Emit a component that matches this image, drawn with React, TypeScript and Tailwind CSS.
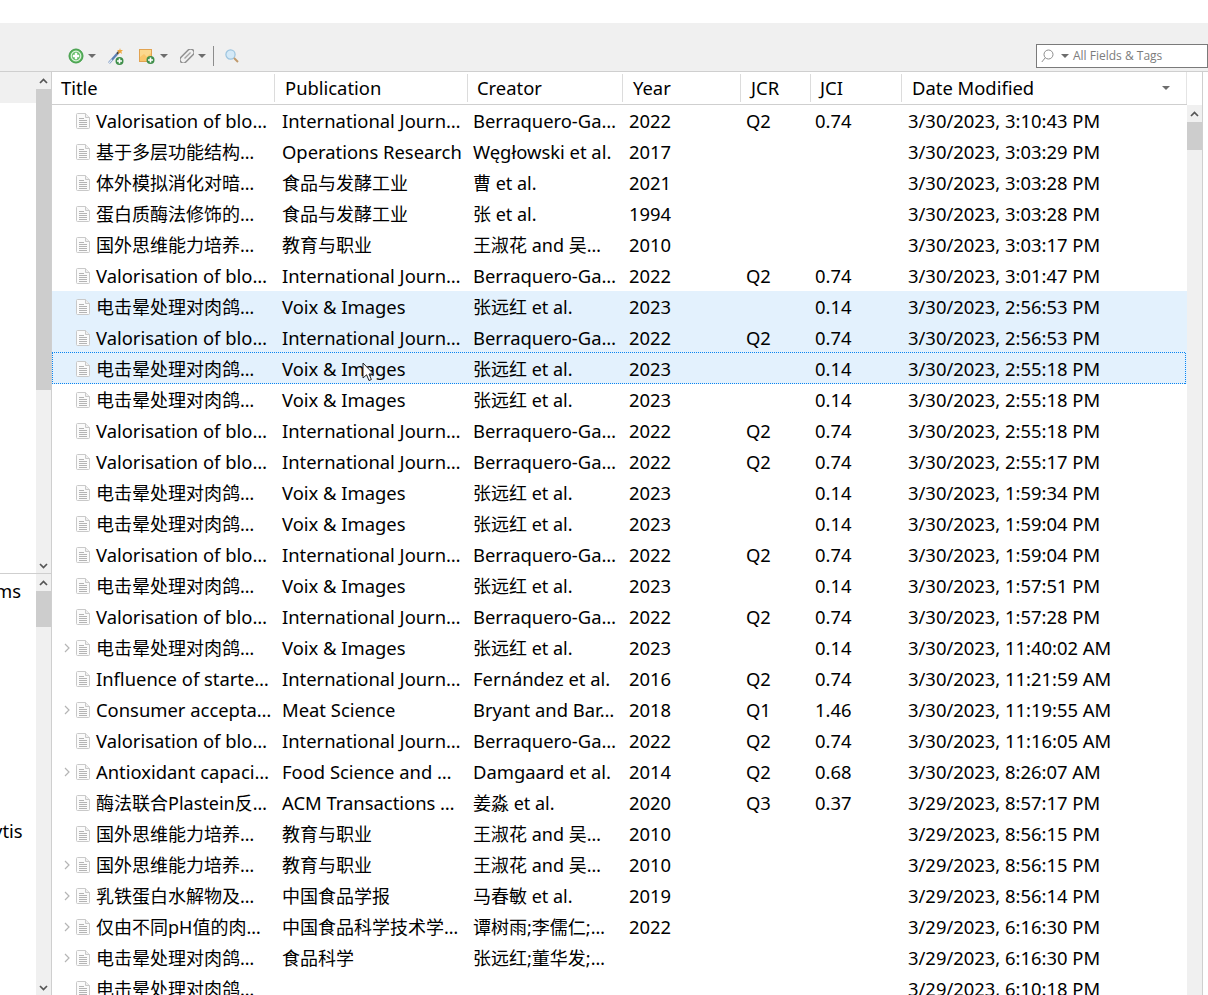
const rowCols = "grid grid-cols-[226px_191px_156px_117px_69px_93px_1fr]";
const headCols = "grid grid-cols-[223px_193px_155px_118px_70px_91px_1fr]";

const VAL = ["Valorisation of blo…", "International Journ…", "Berraquero-Ga…", "2022", "Q2", "0.74"];
const VOIX = ["电击晕处理对肉鸽…", "Voix & Images", "张远红 et al.", "2023", "", "0.14"];
const GW = ["国外思维能力培养…", "教育与职业", "王淑花 and 吴…", "2010", "", ""];

const rows: { c: string[]; d: string; exp?: boolean; sel?: boolean; focus?: boolean }[] = [
  { c: VAL, d: "3/30/2023, 3:10:43 PM" },
  { c: ["基于多层功能结构…", "Operations Research", "Węgłowski et al.", "2017", "", ""], d: "3/30/2023, 3:03:29 PM" },
  { c: ["体外模拟消化对暗…", "食品与发酵工业", "曹 et al.", "2021", "", ""], d: "3/30/2023, 3:03:28 PM" },
  { c: ["蛋白质酶法修饰的…", "食品与发酵工业", "张 et al.", "1994", "", ""], d: "3/30/2023, 3:03:28 PM" },
  { c: GW, d: "3/30/2023, 3:03:17 PM" },
  { c: VAL, d: "3/30/2023, 3:01:47 PM" },
  { c: VOIX, d: "3/30/2023, 2:56:53 PM", sel: true },
  { c: VAL, d: "3/30/2023, 2:56:53 PM", sel: true },
  { c: VOIX, d: "3/30/2023, 2:55:18 PM", sel: true, focus: true },
  { c: VOIX, d: "3/30/2023, 2:55:18 PM" },
  { c: VAL, d: "3/30/2023, 2:55:18 PM" },
  { c: VAL, d: "3/30/2023, 2:55:17 PM" },
  { c: VOIX, d: "3/30/2023, 1:59:34 PM" },
  { c: VOIX, d: "3/30/2023, 1:59:04 PM" },
  { c: VAL, d: "3/30/2023, 1:59:04 PM" },
  { c: VOIX, d: "3/30/2023, 1:57:51 PM" },
  { c: VAL, d: "3/30/2023, 1:57:28 PM" },
  { c: VOIX, d: "3/30/2023, 11:40:02 AM", exp: true },
  { c: ["Influence of starte…", "International Journ…", "Fernández et al.", "2016", "Q2", "0.74"], d: "3/30/2023, 11:21:59 AM" },
  { c: ["Consumer accepta…", "Meat Science", "Bryant and Bar…", "2018", "Q1", "1.46"], d: "3/30/2023, 11:19:55 AM", exp: true },
  { c: VAL, d: "3/30/2023, 11:16:05 AM" },
  { c: ["Antioxidant capaci…", "Food Science and …", "Damgaard et al.", "2014", "Q2", "0.68"], d: "3/30/2023, 8:26:07 AM", exp: true },
  { c: ["酶法联合Plastein反…", "ACM Transactions …", "姜淼 et al.", "2020", "Q3", "0.37"], d: "3/29/2023, 8:57:17 PM" },
  { c: GW, d: "3/29/2023, 8:56:15 PM" },
  { c: GW, d: "3/29/2023, 8:56:15 PM", exp: true },
  { c: ["乳铁蛋白水解物及…", "中国食品学报", "马春敏 et al.", "2019", "", ""], d: "3/29/2023, 8:56:14 PM", exp: true },
  { c: ["仅由不同pH值的肉…", "中国食品科学技术学…", "谭树雨;李儒仁;…", "2022", "", ""], d: "3/29/2023, 6:16:30 PM", exp: true },
  { c: ["电击晕处理对肉鸽…", "食品科学", "张远红;董华发;…", "", "", ""], d: "3/29/2023, 6:16:30 PM", exp: true },
  { c: ["电击晕处理对肉鸽…", "", "", "", "", ""], d: "3/29/2023, 6:10:18 PM" },
];

// Latin-only strings run slightly larger than CJK ones in the reference.
const sizeOf = (t: string) => (/[\u4e00-\u9fff]/.test(t) ? "text-[18px]" : "text-[18.4px]");

function Caret({ up }: { up?: boolean }) {
  return (
    <svg width="9" height="6" viewBox="0 0 9 6" className="block">
      <path d={up ? "M1 5 L4.5 1.5 L8 5" : "M1 1 L4.5 4.5 L8 1"} fill="none" stroke="#555" strokeWidth="1.7" />
    </svg>
  );
}

function Tri({ className = "" }: { className?: string }) {
  return (
    <svg width="8" height="4" viewBox="0 0 8 4" className={"block " + className}>
      <path d="M0 0 H8 L4 4 Z" fill="#6d6d6d" />
    </svg>
  );
}

function DocIcon() {
  return (
    <svg width="14" height="16" viewBox="0 0 14 16" className="block">
      <path d="M0.5 1.5 Q0.5 0.5 1.5 0.5 H9.5 L13.5 4.5 V14.5 Q13.5 15.5 12.5 15.5 H1.5 Q0.5 15.5 0.5 14.5 Z" fill="#fbfbfb" stroke="#c9c9c9" />
      <path d="M9.5 0.5 V4.5 H13.5" fill="#efefef" stroke="#c9c9c9" />
      <path d="M3 5.5 H8 M3 7.5 H11 M3 9.5 H11 M3 11.5 H11 M3 13.5 H11" stroke="#b4b4b4" strokeWidth="1" />
    </svg>
  );
}

function Chevron() {
  return (
    <svg width="6" height="10" viewBox="0 0 6 10" className="block">
      <path d="M1 1 L5 5 L1 9" fill="none" stroke="#b5b5b5" strokeWidth="1.2" />
    </svg>
  );
}

function GreenPlus({ x, y, r = 4 }: { x: number; y: number; r?: number }) {
  return (
    <g>
      <circle cx={x} cy={y} r={r} fill="#3f8f4a" />
      <path d={`M${x - r + 1.5} ${y} H${x + r - 1.5} M${x} ${y - r + 1.5} V${y + r - 1.5}`} stroke="#fff" strokeWidth="1.6" />
    </g>
  );
}

function Toolbar() {
  return (
    <div className="flex h-[48px] shrink-0 items-end bg-[#f0f0f0] pb-[3px] pl-[68px]">
      <div className="mb-[2px] flex h-[20px] items-center">
        <svg width="16" height="16" viewBox="0 0 16 16" className="block">
          <circle cx="8" cy="8" r="7" fill="#58b45c" stroke="#3f9a46" />
          <circle cx="8" cy="8" r="4.8" fill="#62bd66" stroke="#dff3df" strokeWidth="1.2" />
          <path d="M4.8 8 H11.2 M8 4.8 V11.2" stroke="#fff" strokeWidth="2.4" />
        </svg>
        <Tri className="ml-[4px]" />
        <svg width="17" height="17" viewBox="0 0 17 17" className="ml-[11px] block">
          <path d="M2 15 L10 6" stroke="#5a7fb5" strokeWidth="2.4" />
          <path d="M2 15 L5 11.6" stroke="#dfe8f3" strokeWidth="1.4" />
          <path d="M10 6 L12 3.8" stroke="#444" strokeWidth="2.4" />
          <path d="M13 0 L13.6 2 L16 2 L14.4 3.6 L15 6 L13 4.6 L11 6 L11.6 3.6 L10 2 L12.4 2 Z" fill="#eda63b" />
          <GreenPlus x={12.5} y={13} />
        </svg>
        <svg width="18" height="17" viewBox="0 0 18 17" className="ml-[15px] block">
          <rect x="0.5" y="1.5" width="12" height="12" fill="#fbd88d" stroke="#e2a351" />
          <path d="M1 9 L5 6 L8 9 L12 5 V13 H1 Z" fill="#f9c66b" />
          <GreenPlus x={11.5} y={12} />
        </svg>
        <Tri className="ml-[3px]" />
        <svg width="14" height="14" viewBox="0 0 14 14" className="ml-[12px] block">
          <g transform="rotate(45 7 7)" fill="none" stroke="#8f8f8f">
            <rect x="3.6" y="-1.5" width="6.8" height="17" rx="3.4" strokeWidth="1.5" />
            <path d="M7 2 V10.5" strokeWidth="1.4" stroke="#a5a5a5" />
          </g>
        </svg>
        <Tri className="ml-[4px]" />
        <div className="ml-[7px] h-[20px] w-px bg-[#8c8c8c]" />
        <svg width="14" height="14" viewBox="0 0 14 14" className="ml-[11px] block">
          <circle cx="5.5" cy="5.5" r="4.6" fill="#d4e9f7" stroke="#9cc4df" strokeWidth="1.2" />
          <path d="M9 9 L13 13" stroke="#c09a6c" strokeWidth="2" />
        </svg>
      </div>
      <div className="ml-auto flex h-[24px] w-[172px] items-center border border-[#7a7a7a] bg-white pl-[4px] [font-family:'Open_Sans',sans-serif]">
        <svg width="13" height="14" viewBox="0 0 13 14" className="block">
          <circle cx="7.5" cy="5.5" r="4.5" fill="none" stroke="#8d8d8d" />
          <path d="M4.3 8.7 L0.8 13" stroke="#8d8d8d" />
        </svg>
        <Tri className="ml-[7px]" />
        <span className="ml-[4px] text-[12px] leading-none text-[#7c7c7c]">All Fields &amp; Tags</span>
      </div>
    </div>
  );
}

function ScrollTrack({ thumbH }: { thumbH: number }) {
  return (
    <div className="flex w-[16px] shrink-0 flex-col border-r border-[#cfcfcf] bg-[#f0f0f0]">
      <div className="flex h-[17px] shrink-0 items-center justify-center">
        <Caret up />
      </div>
      <div className="w-full shrink-0 bg-[#cdcdcd]" style={{ height: thumbH }} />
      <div className="flex flex-1 items-end justify-center pb-[4px]">
        <Caret />
      </div>
    </div>
  );
}

function LeftPane() {
  return (
    <div className="flex h-full w-[52px] shrink-0 flex-col">
      <div className="flex h-[502px] shrink-0 border-b border-[#cfcfcf]">
        <div className="w-[36px] shrink-0">
          <div className="h-[31px] bg-[#f0f0f0]" />
        </div>
        <ScrollTrack thumbH={301} />
      </div>
      <div className="flex min-h-0 flex-1">
        <div className="w-[36px] shrink-0 overflow-hidden whitespace-nowrap text-[18.4px] leading-[24px] text-black">
          <div className="-ml-[5px] mt-[5px]">ms</div>
          <div className="-ml-[7px] mt-[216px]">ytis</div>
        </div>
        <ScrollTrack thumbH={36} />
      </div>
    </div>
  );
}

function Header() {
  const names = ["Title", "Publication", "Creator", "Year", "JCR", "JCI"];
  const pads = ["pl-[9px]", "pl-[10px]", "pl-[9px]", "pl-[10px]", "pl-[10px]", "pl-[9px]"];
  return (
    <div className={headCols + " h-[33px] shrink-0 border-b border-[#cfcfcf] bg-white text-[18.4px]"}>
      {names.map((n, i) => (
        <div key={n} className="flex h-full items-center py-[2px]">
          <div className={"flex h-full w-full items-center border-r border-[#dcdcdc] " + pads[i]}>{n}</div>
        </div>
      ))}
      <div className="flex items-center justify-between border-r border-[#e4e4e4] pl-[10px] pr-[16px]">
        <span>Date Modified</span>
        <Tri />
      </div>
    </div>
  );
}

const dotsH = "absolute inset-x-0 h-px bg-[repeating-linear-gradient(90deg,#0a84f0_0,#0a84f0_1px,transparent_1px,transparent_2px)]";
const dotsV = "absolute inset-y-0 w-px bg-[repeating-linear-gradient(0deg,#0a84f0_0,#0a84f0_1px,transparent_1px,transparent_2px)]";

function Row({ r }: { r: (typeof rows)[number] }) {
  const bg = r.sel ? "bg-[#e3f1fd]" : "";
  return (
    <div className={rowCols + " relative h-[31px] shrink-0 items-center whitespace-nowrap " + bg}>
      {r.focus && (
        <div className="absolute inset-x-0 -top-px bottom-0 right-[1px]">
          <div className={dotsH + " top-0"} />
          <div className={dotsH + " bottom-0"} />
          <div className={dotsV + " left-0"} />
          <div className={dotsV + " right-0"} />
        </div>
      )}
      <div className="flex items-center pl-[12px]">
        <div className="flex w-[12px] shrink-0 items-center">{r.exp && <Chevron />}</div>
        <DocIcon />
        <span className={"ml-[6px] " + sizeOf(r.c[0])}>{r.c[0]}</span>
      </div>
      {r.c.slice(1).map((t, i) => (
        <div key={i} className={"overflow-hidden pl-[4px] " + sizeOf(t)}>
          {t}
        </div>
      ))}
      <div className="pl-[4px] text-[18.4px]">{r.d}</div>
    </div>
  );
}

function Cursor() {
  return (
    <svg width="14" height="21" viewBox="0 0 14 21" className="absolute left-[310px] top-[290px]">
      <path d="M1 1 V16 L4.6 12.8 L7 18.5 L9.4 17.5 L7 12 H11.5 Z" fill="#fff" stroke="#222" strokeWidth="1" />
    </svg>
  );
}

export default function App() {
  return (
    <div className="flex h-[995px] w-[1208px] flex-col overflow-hidden bg-white text-[18px] leading-[24px] text-black [font-family:'Noto_Sans','Noto_Sans_CJK_SC',sans-serif]">
      <div className="h-[23px] shrink-0 bg-white" />
      <Toolbar />
      <div className="flex min-h-0 flex-1 border-t border-[#cfcfcf]">
        <LeftPane />
        <div className="relative flex min-w-0 flex-1 flex-col overflow-hidden">
          <Header />
          {rows.map((r, i) => (
            <Row key={i} r={r} />
          ))}
          <Cursor />
        </div>
        <div className="flex w-[16px] shrink-0 flex-col border-r border-[#cfcfcf]">
          <div className="h-[33px] shrink-0 bg-white" />
          <div className="flex flex-1 flex-col bg-[#f0f0f0]">
            <div className="flex h-[17px] shrink-0 items-center justify-center">
              <Caret up />
            </div>
            <div className="h-[28px] w-full bg-[#cdcdcd]" />
          </div>
        </div>
        <div className="w-[5px] shrink-0 bg-white" />
      </div>
    </div>
  );
}
